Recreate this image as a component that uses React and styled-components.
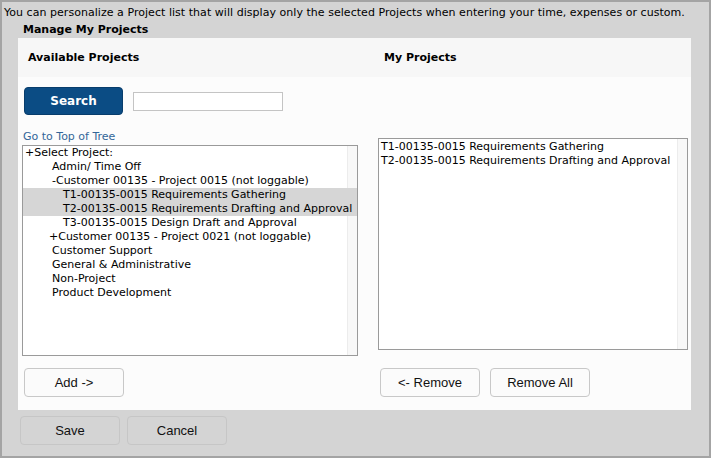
import React from "react";
import styled, { createGlobalStyle } from "styled-components";

const Global = createGlobalStyle`
  html, body { margin: 0; padding: 0; }
  body { font-family: "DejaVu Sans", Verdana, sans-serif; font-size: 11px; color: #000; }
  * { box-sizing: border-box; }
`;

const Frame = styled.div`
  width: 711px;
  height: 458px;
  border: 2px solid #a4a4a4;
  background: #d4d4d4;
  padding: 0 0 0 2px;
  display: flex;
  flex-direction: column;
`;

const Intro = styled.div`
  height: 22px;
  line-height: 22px;
  white-space: nowrap;
  letter-spacing: 0.04px;
`;

const Title = styled.div`
  font-weight: bold;
  padding-left: 19px;
  height: 14px;
  line-height: 12px;
`;

const Panel = styled.div`
  margin-left: 14px;
  width: 673px;
  height: 372px;
  background: #fcfcfc;
  display: grid;
  grid-template-columns: 360px 1fr;
  position: relative;
`;

const HeaderBand = styled.div`
  position: absolute;
  left: 0;
  right: 0;
  top: 0;
  height: 39px;
  background: #f7f7f7;
`;

const Column = styled.div`
  position: relative;
  display: flex;
  flex-direction: column;
  padding-left: ${(p) => p.$pad}px;
`;

const ColHead = styled.div`
  height: 39px;
  line-height: 39px;
  font-weight: bold;
  padding-left: ${(p) => p.$indent}px;
`;

const SearchRow = styled.div`
  display: flex;
  align-items: center;
  gap: 10px;
  margin-top: 10px;
  padding-left: 2px;
`;

const SearchButton = styled.button`
  width: 99px;
  height: 28px;
  border: 1px solid #083d6c;
  border-radius: 4px;
  background: #0b4c84;
  color: #fff;
  font-family: "DejaVu Sans", Verdana, sans-serif;
  font-weight: bold;
  font-size: 12px;
  padding: 0;
`;

const SearchInput = styled.input`
  width: 150px;
  height: 19px;
  border: 1px solid #c4c4c4;
  background: #fff;
  padding: 0 2px;
  font-size: 11px;
  outline: none;
`;

const TopLink = styled.a`
  display: block;
  margin-top: 15px;
  padding-left: 1px;
  height: 14px;
  line-height: 14px;
  color: #336699;
  text-decoration: none;
  cursor: pointer;
`;

const ListBox = styled.div`
  position: relative;
  width: ${(p) => p.$w}px;
  height: ${(p) => p.$h}px;
  margin-top: ${(p) => p.$top}px;
  border: 1px solid #9a9a9a;
  background: #fff;
  padding-top: ${(p) => p.$padTop}px;
  overflow: hidden;
`;

const ScrollStrip = styled.div`
  position: absolute;
  top: 0;
  right: 0;
  bottom: 0;
  width: 10px;
  background: #f8f8f8;
  border-left: 1px solid #ececec;
`;

const Row = styled.div`
  position: relative;
  height: 14px;
  line-height: 14px;
  padding-left: ${(p) => p.$indent}px;
  white-space: nowrap;
  background: ${(p) => (p.$selected ? "#d6d6d6" : "transparent")};
  z-index: ${(p) => (p.$selected ? 1 : 0)};
`;

const ButtonRow = styled.div`
  display: flex;
  gap: ${(p) => p.$gap}px;
  margin-top: ${(p) => p.$top}px;
  padding-left: ${(p) => p.$pad}px;
`;

const PlainButton = styled.button`
  width: 100px;
  height: 29px;
  border: 1px solid ${(p) => (p.$muted ? "#c6c6c6" : "#c8c8c8")};
  border-radius: 4px;
  background: ${(p) => (p.$muted ? "#d4d4d4" : "#fbfbfb")};
  color: #111;
  font-family: "Liberation Sans", Arial, sans-serif;
  font-size: 13px;
  padding: 0;
`;

const Footer = styled.div`
  display: flex;
  gap: 7px;
  margin-top: 6px;
  padding-left: 16px;
`;

const tree = [
  { t: "+Select Project:", i: 2 },
  { t: "Admin/ Time Off", i: 29 },
  { t: "-Customer 00135 - Project 0015 (not loggable)", i: 29 },
  { t: "T1-00135-0015 Requirements Gathering", i: 40, s: true },
  { t: "T2-00135-0015 Requirements Drafting and Approval", i: 40, s: true },
  { t: "T3-00135-0015 Design Draft and Approval", i: 40 },
  { t: "+Customer 00135 - Project 0021 (not loggable)", i: 26 },
  { t: "Customer Support", i: 29 },
  { t: "General & Administrative", i: 29 },
  { t: "Non-Project", i: 29 },
  { t: "Product Development", i: 29 },
];

const mine = [
  "T1-00135-0015 Requirements Gathering",
  "T2-00135-0015 Requirements Drafting and Approval",
];

export default function App() {
  return (
    <>
      <Global />
      <Frame>
        <Intro>
          You can personalize a Project list that will display only the selected Projects when entering your time, expenses or custom.
        </Intro>
        <Title>Manage My Projects</Title>
        <Panel>
          <HeaderBand />
          <Column $pad={4}>
            <ColHead $indent={6}>Available Projects</ColHead>
            <SearchRow>
              <SearchButton>Search</SearchButton>
              <SearchInput type="text" />
            </SearchRow>
            <TopLink>Go to Top of Tree</TopLink>
            <ListBox $w={336} $h={211} $top={1} $padTop={0}>
              <ScrollStrip />
              {tree.map((r) => (
                <Row key={r.t} $indent={r.i} $selected={r.s}>
                  {r.t}
                </Row>
              ))}
            </ListBox>
            <ButtonRow $gap={10} $top={12} $pad={2}>
              <PlainButton>Add -&gt;</PlainButton>
            </ButtonRow>
          </Column>
          <Column $pad={0}>
            <ColHead $indent={6}>My Projects</ColHead>
            <ListBox $w={310} $h={212} $top={61} $padTop={1}>
              <ScrollStrip />
              {mine.map((t) => (
                <Row key={t} $indent={2}>
                  {t}
                </Row>
              ))}
            </ListBox>
            <ButtonRow $gap={10} $top={18} $pad={2}>
              <PlainButton>&lt;- Remove</PlainButton>
              <PlainButton>Remove All</PlainButton>
            </ButtonRow>
          </Column>
        </Panel>
        <Footer>
          <PlainButton $muted>Save</PlainButton>
          <PlainButton $muted>Cancel</PlainButton>
        </Footer>
      </Frame>
    </>
  );
}
